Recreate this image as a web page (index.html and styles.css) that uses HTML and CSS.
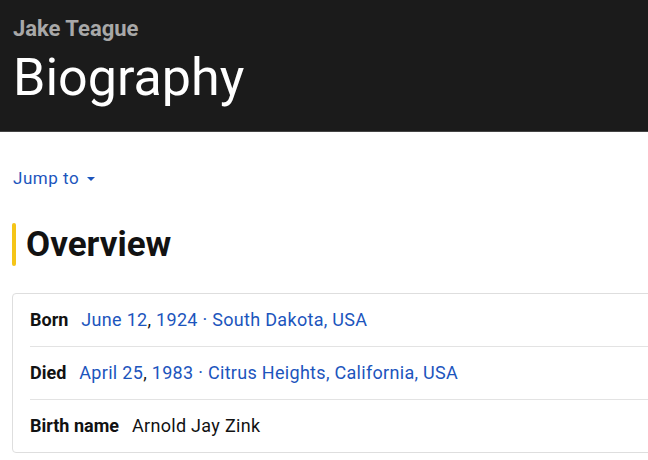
FILE: index.html
```html
<!DOCTYPE html>
<html lang="en">
<head>
<meta charset="utf-8">
<title>Jake Teague - Biography</title>
<link rel="stylesheet" href="styles.css">
</head>
<body>
<header class="hero">
  <div class="hero-name">Jake Teague</div>
  <h1 class="hero-title">Biography</h1>
</header>
<main class="content">
  <a class="jump" href="#">Jump to <span class="caret"></span></a>
  <h2 class="section-title">Overview</h2>
  <div class="card">
    <div class="row">
      <span class="label">Born</span>
      <span class="value"><a href="#">June 12</a><span class="plain">, </span><a href="#">1924</a><span class="sep"> · </span><a href="#">South Dakota, USA</a></span>
    </div>
    <div class="row">
      <span class="label">Died</span>
      <span class="value"><a href="#">April 25</a><span class="plain">, </span><a href="#">1983</a><span class="sep"> · </span><a href="#">Citrus Heights, California, USA</a></span>
    </div>
    <div class="row last">
      <span class="label">Birth name</span>
      <span class="value plain">Arnold Jay Zink</span>
    </div>
  </div>
</main>
</body>
</html>
```
FILE: styles.css
```css
html, body {
  margin: 0;
  padding: 0;
  overflow: hidden;
  background: #ffffff;
}
body {
  font-family: Roboto, "Liberation Sans", Arial, sans-serif;
  color: #121212;
}
a {
  color: #1c55bd;
  text-decoration: none;
}
.hero {
  box-sizing: border-box;
  height: 132px;
  background: #1b1b1b;
  padding: 16px 13px 0;
  border-bottom: 1px solid #444444;
}
.hero-name {
  font-size: 22px;
  line-height: 26px;
  font-weight: 700;
  color: #a8a8a8;
}
.hero-title {
  margin: 6px 0 0;
  font-size: 52px;
  line-height: 60px;
  font-weight: 400;
  color: #ffffff;
}
.content {
  padding: 0 12px;
}
.jump {
  display: inline-flex;
  align-items: center;
  gap: 8px;
  margin-top: 34px;
  margin-left: 1px;
  font-size: 17px;
  line-height: 24px;
  letter-spacing: 0.03em;
}
.caret {
  width: 0;
  height: 0;
  border-left: 4px solid transparent;
  border-right: 4px solid transparent;
  border-top: 4px solid #1c55bd;
  margin-top: 1px;
}
.section-title {
  display: flex;
  align-items: center;
  gap: 10px;
  margin: 33px 0 0;
  font-size: 35px;
  line-height: 43px;
  font-weight: 700;
  color: #121212;
}
.section-title::before {
  content: "";
  width: 4px;
  height: 43px;
  border-radius: 2px;
  background: #f5c518;
}
.card {
  margin-top: 27px;
  width: 720px;
  border: 1px solid #dedede;
  border-radius: 4px;
  padding-left: 17px;
}
.row {
  display: flex;
  align-items: center;
  gap: 13px;
  height: 52px;
  border-bottom: 1px solid #e3e3e3;
  font-size: 18px;
  line-height: 24px;
}
.row.last {
  border-bottom: none;
}
.label {
  font-weight: 700;
  color: #121212;
}
.value {
  color: #1c55bd;
  letter-spacing: 0.3px;
}
.plain {
  color: #121212;
}
.sep {
  color: #1c55bd;
}
```
